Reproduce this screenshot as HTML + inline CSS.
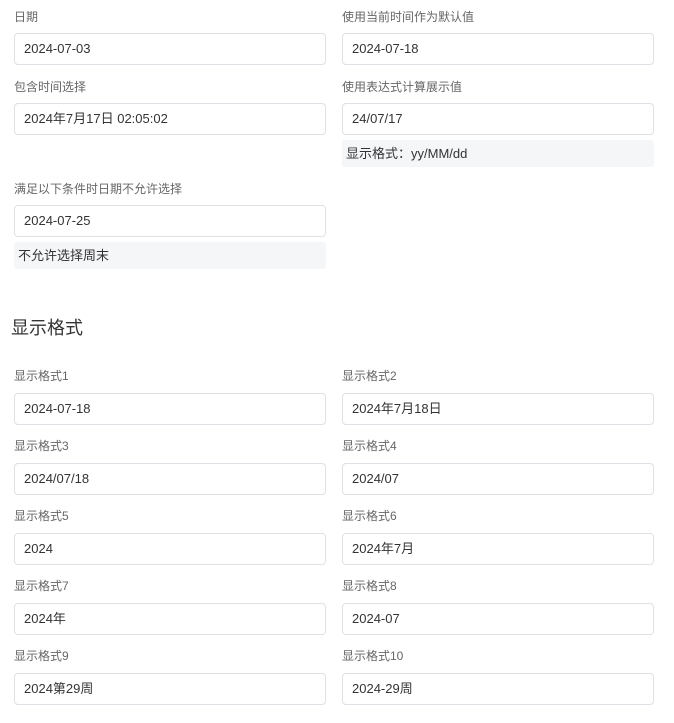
<!DOCTYPE html>
<html><head><meta charset="utf-8"><style>
body{margin:0;width:674px;height:723px;background:#fff;font-family:"Liberation Sans","Noto Sans CJK SC",sans-serif;position:relative;overflow:hidden}
.l{position:absolute;font-size:12px;color:#666;line-height:14px}
.i{position:absolute;width:310px;height:30px;border:1px solid #e0e0e6;border-radius:4px;font-size:13px;color:#333;line-height:30px;padding-left:9px;box-sizing:content-box;width:301px}
.h{position:absolute;width:312px;height:27px;background:#f5f6f8;border-radius:3px;font-size:13px;color:#333;line-height:27px;padding-left:4px;box-sizing:border-box}
.t{position:absolute;left:11px;top:317px;font-size:18px;color:#333;line-height:22px}
</style></head><body>
<div class="l" style="left:14px;top:10px">日期</div>
<div class="i" style="left:14px;top:33px">2024-07-03</div>
<div class="l" style="left:342px;top:10px">使用当前时间作为默认值</div>
<div class="i" style="left:342px;top:33px">2024-07-18</div>
<div class="l" style="left:14px;top:80px">包含时间选择</div>
<div class="i" style="left:14px;top:103px">2024年7月17日 02:05:02</div>
<div class="l" style="left:342px;top:80px">使用表达式计算展示值</div>
<div class="i" style="left:342px;top:103px">24/07/17</div>
<div class="h" style="left:342px;top:140px">显示格式：yy/MM/dd</div>
<div class="l" style="left:14px;top:182px">满足以下条件时日期不允许选择</div>
<div class="i" style="left:14px;top:205px">2024-07-25</div>
<div class="h" style="left:14px;top:242px">不允许选择周末</div>
<div class="t">显示格式</div>
<div class="l" style="left:14px;top:369px">显示格式1</div>
<div class="i" style="left:14px;top:393px">2024-07-18</div>
<div class="l" style="left:342px;top:369px">显示格式2</div>
<div class="i" style="left:342px;top:393px">2024年7月18日</div>
<div class="l" style="left:14px;top:439px">显示格式3</div>
<div class="i" style="left:14px;top:463px">2024/07/18</div>
<div class="l" style="left:342px;top:439px">显示格式4</div>
<div class="i" style="left:342px;top:463px">2024/07</div>
<div class="l" style="left:14px;top:509px">显示格式5</div>
<div class="i" style="left:14px;top:533px">2024</div>
<div class="l" style="left:342px;top:509px">显示格式6</div>
<div class="i" style="left:342px;top:533px">2024年7月</div>
<div class="l" style="left:14px;top:579px">显示格式7</div>
<div class="i" style="left:14px;top:603px">2024年</div>
<div class="l" style="left:342px;top:579px">显示格式8</div>
<div class="i" style="left:342px;top:603px">2024-07</div>
<div class="l" style="left:14px;top:649px">显示格式9</div>
<div class="i" style="left:14px;top:673px">2024第29周</div>
<div class="l" style="left:342px;top:649px">显示格式10</div>
<div class="i" style="left:342px;top:673px">2024-29周</div>
</body></html>
